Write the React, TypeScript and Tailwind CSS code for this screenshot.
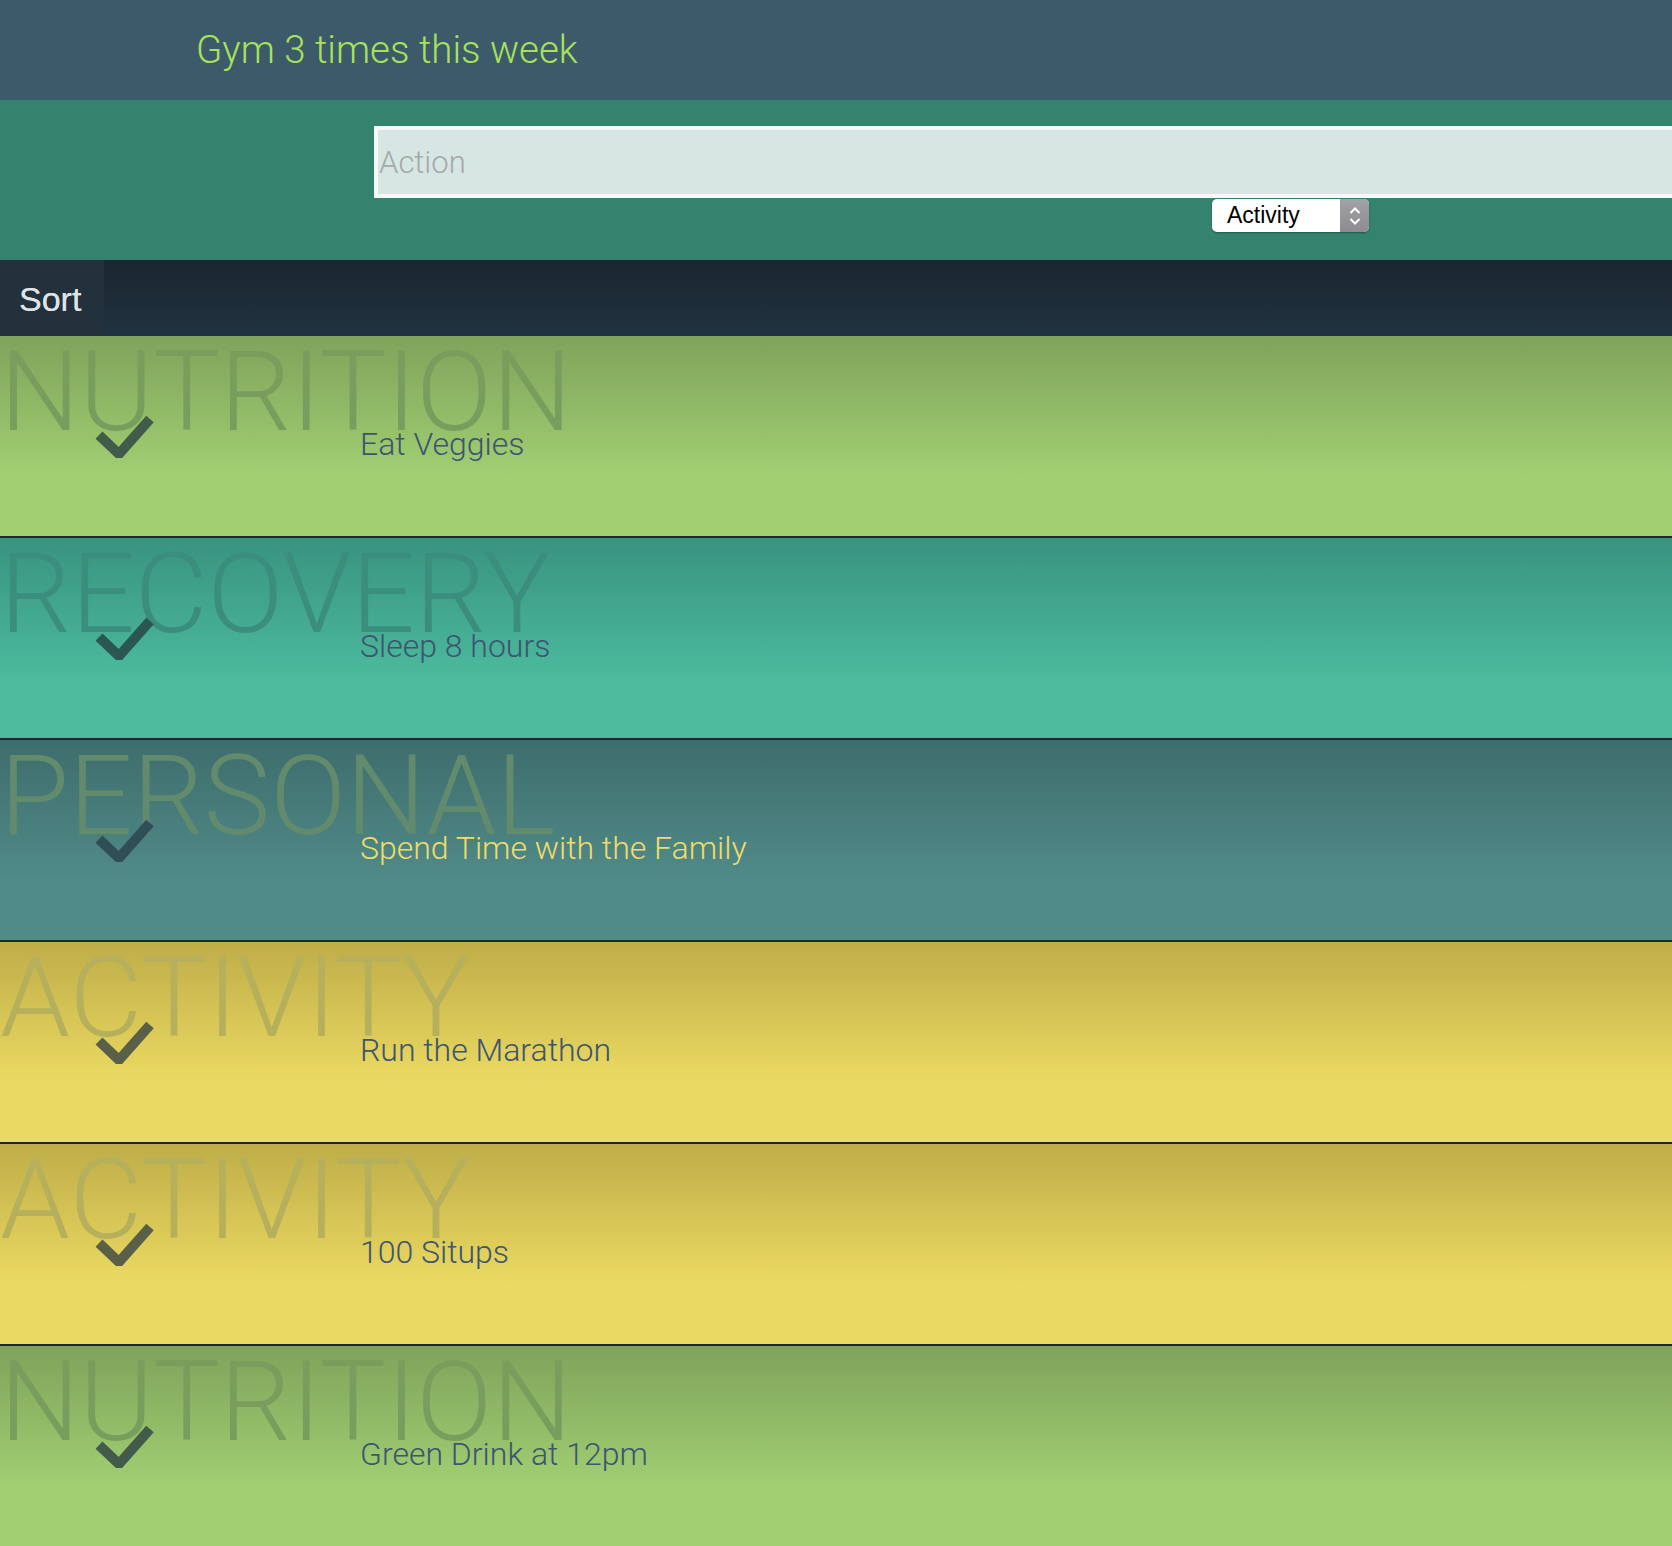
import React from "react";

type Category = "NUTRITION" | "RECOVERY" | "PERSONAL" | "ACTIVITY";

const theme: Record<Category, { bg: string; mark: string; check: string }> = {
  NUTRITION: {
    bg: "bg-linear-to-b from-[#7fa35b] to-[#a1cf72] to-70%",
    mark: "text-[#789d5d]",
    check: "text-[#425b4a]",
  },
  RECOVERY: {
    bg: "bg-linear-to-b from-[#399380] to-[#4bba9d] to-70%",
    mark: "text-[#3b8e7e]",
    check: "text-[#2b5753]",
  },
  PERSONAL: {
    bg: "bg-linear-to-b from-[#3e6d6c] to-[#508b89] to-70%",
    mark: "text-[#628b6d]",
    check: "text-[#2f4e55]",
  },
  ACTIVITY: {
    bg: "bg-linear-to-b from-[#bfad49] to-[#ebda61] to-70%",
    mark: "text-[#b6b05c]",
    check: "text-[#5a6048]",
  },
};

const actions: { cat: Category; text: string; highlight?: boolean }[] = [
  { cat: "NUTRITION", text: "Eat Veggies" },
  { cat: "RECOVERY", text: "Sleep 8 hours" },
  { cat: "PERSONAL", text: "Spend Time with the Family", highlight: true },
  { cat: "ACTIVITY", text: "Run the Marathon" },
  { cat: "ACTIVITY", text: "100 Situps" },
  { cat: "NUTRITION", text: "Green Drink at 12pm" },
];

function Check({ className }: { className: string }) {
  return (
    <svg viewBox="0 0 60 44" className={`w-[60px] h-[44px] shrink-0 ${className}`}>
      <path d="M5 21 L25 40 L56 5" fill="none" stroke="currentColor" strokeWidth="10" strokeLinejoin="miter" strokeLinecap="butt" />
    </svg>
  );
}

function SelectBox() {
  return (
    <div className="flex w-[157px] h-[33px] rounded-[5px] overflow-hidden bg-white shadow-[0_1px_2px_rgba(0,0,0,0.35)]">
      <div className="flex-1 pl-[15px] flex items-center text-[23px] leading-none text-black font-['Liberation_Sans',sans-serif]">
        Activity
      </div>
      <div className="w-[29px] bg-linear-to-b from-[#a3a3a7] to-[#8c8c90] flex items-center justify-center">
        <svg viewBox="0 0 14 24" className="w-[14px] h-[24px]">
          <path d="M2.5 9 L7 4.5 L11.5 9 M2.5 15 L7 19.5 L11.5 15" fill="none" stroke="white" strokeWidth="2" />
        </svg>
      </div>
    </div>
  );
}

export default function App() {
  return (
    <div className="min-h-screen overflow-hidden bg-[#1c2a30] font-['Roboto',sans-serif]">
      {/* goal header */}
      <header className="h-[100px] bg-[#3d5a6b] pl-[196px] pt-[31px]">
        <h1 className="text-[38.5px] leading-[38px] font-light text-[#a6e35a]">Gym 3 times this week</h1>
      </header>

      {/* new action form */}
      <div className="h-[160px] bg-[#34836e] pt-[26px] pl-[374px]">
        <input
          placeholder="Action"
          className="block w-[1400px] h-[72px] border-4 border-[#f6f9f8] bg-[#d6e6e2] pl-[1px] text-[31px] font-light text-[#3d5570] placeholder:text-[#a8a8a8] outline-none"
        />
        <div className="mt-[1px] pl-[838px]">
          <SelectBox />
        </div>
      </div>

      {/* sort bar */}
      <div className="h-[76px] flex bg-linear-to-b from-[#1a262f] to-[#213340]">
        <div className="w-[104px] h-full bg-[#22313c] pl-[19px] pt-[22px] text-[34px] leading-[34px] text-[#dfe3e6] [text-shadow:0_0_0.6px_#dfe3e6] font-['Liberation_Sans',sans-serif]">
          Sort
        </div>
      </div>

      {/* list */}
      <ul>
        {actions.map((a, i) => {
          const t = theme[a.cat];
          return (
            <li key={i} className={`relative h-[202px] border-b-2 border-[#1c2a30] overflow-hidden ${t.bg}`}>
              <div className={`absolute left-0 top-0 text-[112px] leading-[112px] font-light ${t.mark}`}>
                {a.cat}
              </div>
              <div className="relative flex items-start pt-[78px] pl-[94px]">
                <Check className={t.check} />
                <span
                  className={`ml-[206px] mt-[12px] text-[32px] leading-[36px] font-light ${
                    a.highlight ? "text-[#efdc6a]" : "text-[#3d5570]"
                  }`}
                >
                  {a.text}
                </span>
              </div>
            </li>
          );
        })}
      </ul>
    </div>
  );
}
